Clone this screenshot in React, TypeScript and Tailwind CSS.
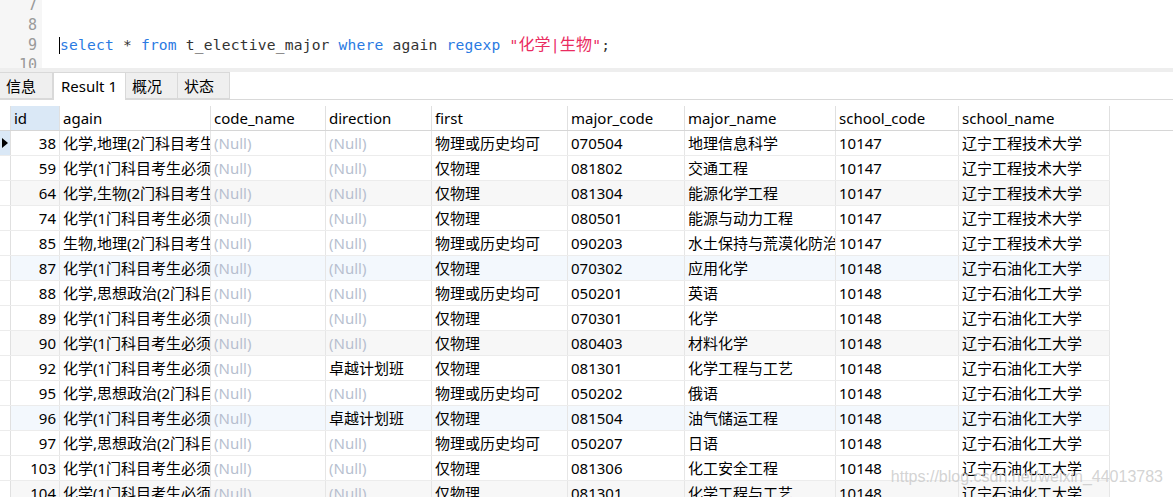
import React from "react";

type Row = {
  id: number;
  again: string;
  codeName: string | null;
  direction: string | null;
  first: string;
  majorCode: string;
  majorName: string;
  schoolCode: string;
  schoolName: string;
  tone?: "gray" | "blue";
};

const A2 = "化学,地理(2门科目考生均须选考方可报考)";
const A1 = "化学(1门科目考生必须选考方可报考)";
const AB = "化学,生物(2门科目考生均须选考方可报考)";
const BD = "生物,地理(2门科目考生均须选考方可报考)";
const AZ = "化学,思想政治(2门科目考生均须选考方可报考)";
const GX = "辽宁工程技术大学";
const SY = "辽宁石油化工大学";

const rows: Row[] = [
  { id: 38, again: A2, codeName: null, direction: null, first: "物理或历史均可", majorCode: "070504", majorName: "地理信息科学", schoolCode: "10147", schoolName: GX },
  { id: 59, again: A1, codeName: null, direction: null, first: "仅物理", majorCode: "081802", majorName: "交通工程", schoolCode: "10147", schoolName: GX },
  { id: 64, again: AB, codeName: null, direction: null, first: "仅物理", majorCode: "081304", majorName: "能源化学工程", schoolCode: "10147", schoolName: GX, tone: "gray" },
  { id: 74, again: A1, codeName: null, direction: null, first: "仅物理", majorCode: "080501", majorName: "能源与动力工程", schoolCode: "10147", schoolName: GX },
  { id: 85, again: BD, codeName: null, direction: null, first: "物理或历史均可", majorCode: "090203", majorName: "水土保持与荒漠化防治", schoolCode: "10147", schoolName: GX },
  { id: 87, again: A1, codeName: null, direction: null, first: "仅物理", majorCode: "070302", majorName: "应用化学", schoolCode: "10148", schoolName: SY, tone: "blue" },
  { id: 88, again: AZ, codeName: null, direction: null, first: "物理或历史均可", majorCode: "050201", majorName: "英语", schoolCode: "10148", schoolName: SY },
  { id: 89, again: A1, codeName: null, direction: null, first: "仅物理", majorCode: "070301", majorName: "化学", schoolCode: "10148", schoolName: SY },
  { id: 90, again: A1, codeName: null, direction: null, first: "仅物理", majorCode: "080403", majorName: "材料化学", schoolCode: "10148", schoolName: SY, tone: "gray" },
  { id: 92, again: A1, codeName: null, direction: "卓越计划班", first: "仅物理", majorCode: "081301", majorName: "化学工程与工艺", schoolCode: "10148", schoolName: SY },
  { id: 95, again: AZ, codeName: null, direction: null, first: "物理或历史均可", majorCode: "050202", majorName: "俄语", schoolCode: "10148", schoolName: SY },
  { id: 96, again: A1, codeName: null, direction: "卓越计划班", first: "仅物理", majorCode: "081504", majorName: "油气储运工程", schoolCode: "10148", schoolName: SY, tone: "blue" },
  { id: 97, again: AZ, codeName: null, direction: null, first: "物理或历史均可", majorCode: "050207", majorName: "日语", schoolCode: "10148", schoolName: SY },
  { id: 103, again: A1, codeName: null, direction: null, first: "仅物理", majorCode: "081306", majorName: "化工安全工程", schoolCode: "10148", schoolName: SY },
  { id: 104, again: A1, codeName: null, direction: null, first: "仅物理", majorCode: "081301", majorName: "化学工程与工艺", schoolCode: "10148", schoolName: SY, tone: "gray" },
];

const cols = [
  { key: "id", label: "id", w: "w-[49px]" },
  { key: "again", label: "again", w: "w-[151px]" },
  { key: "codeName", label: "code_name", w: "w-[115px]" },
  { key: "direction", label: "direction", w: "w-[106px]" },
  { key: "first", label: "first", w: "w-[136px]" },
  { key: "majorCode", label: "major_code", w: "w-[117px]" },
  { key: "majorName", label: "major_name", w: "w-[151px]" },
  { key: "schoolCode", label: "school_code", w: "w-[123px]" },
  { key: "schoolName", label: "school_name", w: "w-[151px]" },
];

function Cell({ w, children, right, nul }: { w: string; children: React.ReactNode; right?: boolean; nul?: boolean }) {
  return (
    <div
      className={`${w} shrink-0 overflow-hidden whitespace-nowrap border-r border-[#e6e6e6] px-[3px] ${
        right ? "text-right" : ""
      } ${nul ? "text-[#b7bfcf]" : "text-black"}`}
    >
      {children}
    </div>
  );
}

function Editor() {
  return (
    <div className="relative h-[68px] overflow-hidden bg-white">
      <div className="-mt-[5px] flex">
        <div className="w-[42px] shrink-0 bg-[#f6f6f6] pr-[5px] text-right font-['DejaVu_Sans_Mono',monospace] text-[15px] leading-[20px] text-[#9a9a9a]">
          <div>7</div>
          <div>8</div>
          <div>9</div>
          <div>10</div>
        </div>
        <div className="pl-[18px] font-['DejaVu_Sans_Mono','Noto_Sans_CJK_SC',monospace] text-[14.6px] leading-[20px] tracking-[0.2px] text-[#333]">
          <div>&nbsp;</div>
          <div>&nbsp;</div>
          <div className="relative whitespace-pre">
            <span className="absolute -left-[1px] top-[2px] h-[17px] w-[1px] bg-black" />
            <span className="text-[#2a7ae2]">select</span> * <span className="text-[#2a7ae2]">from</span> t_elective_major{" "}
            <span className="text-[#2a7ae2]">where</span> again <span className="text-[#2a7ae2]">regexp</span>{" "}
            <span className="text-[#ea2b5f]">
              "<span className="text-[16px]">化学</span>|<span className="text-[16px]">生物</span>"
            </span>
            ;
          </div>
          <div>&nbsp;</div>
        </div>
      </div>
    </div>
  );
}

function Tabs() {
  const base = "h-[27px] border border-[#d9d9d9] px-[6px] leading-[26px]";
  return (
    <div className="flex h-[28px] items-end border-b border-[#d9d9d9] font-['Noto_Sans','Noto_Sans_CJK_SC',sans-serif] text-[15px] text-black">
      <div className={`${base} w-[53px] border-l-0 bg-[#efefef]`}>信息</div>
      <div className="-mb-px h-[28px] w-[73px] border border-b-0 border-[#d9d9d9] bg-white px-[7px] leading-[27px]">Result 1</div>
      <div className={`${base} w-[52px] border-l-0 bg-[#efefef]`}>概况</div>
      <div className={`${base} w-[52px] border-l-0 bg-[#efefef]`}>状态</div>
    </div>
  );
}

function Grid() {
  return (
    <div className="pt-[6px] font-['Noto_Sans','Noto_Sans_CJK_SC',sans-serif] text-[15px]">
      <div className="flex h-[25px] border-b border-[#d6d6d6] leading-[24px]">
        <div className="w-[11px] shrink-0 border-r border-[#e0e0e0]" />
        {cols.map((c, i) => (
          <div
            key={c.key}
            className={`${c.w} shrink-0 overflow-hidden whitespace-nowrap border-r border-[#e0e0e0] px-[3px] text-black ${
              i === 0 ? "bg-[#dae8f6]" : "bg-white"
            }`}
          >
            {c.label}
          </div>
        ))}
      </div>
      {rows.map((r, idx) => (
        <div
          key={r.id}
          className={`flex h-[25px] w-[1110px] border-b border-[#ececec] leading-[24px] ${
            r.tone === "gray" ? "bg-[#f7f7f7]" : r.tone === "blue" ? "bg-[#f3f8fd]" : "bg-white"
          }`}
        >
          <div
            className={`flex w-[11px] shrink-0 items-center justify-center border-r border-[#e0e0e0] ${
              idx === 0 ? "bg-[#dae8f6]" : "bg-white"
            }`}
          >
            {idx === 0 && (
              <svg width="6" height="10" viewBox="0 0 6 10">
                <path d="M0 0 L6 5 L0 10 Z" fill="#000" />
              </svg>
            )}
          </div>
          <Cell w="w-[49px]" right>
            {r.id}
          </Cell>
          <Cell w="w-[151px]">{r.again}</Cell>
          <Cell w="w-[115px]" nul={r.codeName === null}>
            {r.codeName ?? "(Null)"}
          </Cell>
          <Cell w="w-[106px]" nul={r.direction === null}>
            {r.direction ?? "(Null)"}
          </Cell>
          <Cell w="w-[136px]">{r.first}</Cell>
          <Cell w="w-[117px]">{r.majorCode}</Cell>
          <Cell w="w-[151px]">{r.majorName}</Cell>
          <Cell w="w-[123px]">{r.schoolCode}</Cell>
          <Cell w="w-[151px]">{r.schoolName}</Cell>
        </div>
      ))}
    </div>
  );
}

export default function App() {
  return (
    <div className="relative h-[497px] w-[1173px] overflow-hidden bg-white">
      <Editor />
      <div className="h-[4px] bg-[#eeeeee]" />
      <Tabs />
      <Grid />
      <div className="pointer-events-none absolute bottom-[8px] right-[10px] font-['Liberation_Sans',sans-serif] text-[16px] text-[#c8c8c8]/80">
        https://blog.csdn.net/weixin_44013783
      </div>
    </div>
  );
}
